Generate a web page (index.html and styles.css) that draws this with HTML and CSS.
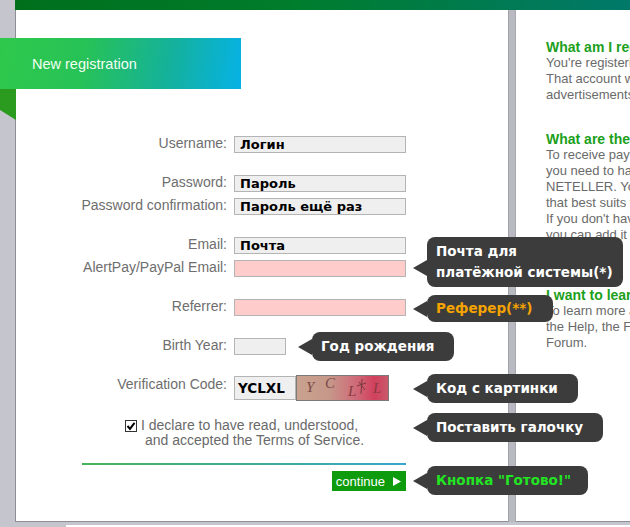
FILE: index.html
```html
<!DOCTYPE html>
<html lang="ru">
<head>
    <meta charset="UTF-8">
    <meta name="viewport" content="width=device-width, initial-scale=1.0">
    <title>New registration</title>
    <link rel="stylesheet" href="styles.css">
</head>
<body>
    <div class="page">
        <div class="topbar"></div>
        <div class="columns">
            <div class="main">
                <div class="banner">New registration</div>

                <form class="form">
                    <div class="row">
                        <label class="label">Username:</label>
                        <div class="input">Логин</div>
                    </div>
                    <div class="row gap">
                        <label class="label">Password:</label>
                        <div class="input">Пароль</div>
                    </div>
                    <div class="row">
                        <label class="label">Password confirmation:</label>
                        <div class="input">Пароль ещё раз</div>
                    </div>
                    <div class="row gap">
                        <label class="label">Email:</label>
                        <div class="input">Почта</div>
                    </div>
                    <div class="row">
                        <label class="label">AlertPay/PayPal Email:</label>
                        <div class="input pink"></div>
                        <div class="tip tip-pay">Почта для<br>платёжной системы(*)</div>
                    </div>
                    <div class="row gap">
                        <label class="label">Referrer:</label>
                        <div class="input pink"></div>
                        <div class="tip tip-ref"><span class="orange">Реферер(**)</span></div>
                    </div>
                    <div class="row gap">
                        <label class="label">Birth Year:</label>
                        <div class="input short"></div>
                        <div class="tip tip-year">Год рождения</div>
                    </div>
                    <div class="row code-row">
                        <label class="label">Verification Code:</label>
                        <div class="input code">YCLXL</div>
                        <div class="captcha">
                            <span class="cl cl1">Y</span>
                            <span class="cl cl2">C</span>
                            <span class="cl cl3">L</span>
                            <svg class="cl cl4" width="10" height="15" viewBox="0 0 10 15">
                                <path d="M5 0 L4 15 M0 7 L9 4 M2 3 L8 11" stroke="#7a3a40" stroke-width="1" fill="none"/>
                            </svg>
                            <span class="cl cl5">L</span>
                        </div>
                        <div class="tip tip-code">Код с картинки</div>
                    </div>
                    <div class="check">
                        <span class="box">
                            <svg width="10" height="10" viewBox="0 0 10 10">
                                <path d="M1.5 5 L4 7.8 L8.5 1.8" stroke="#000" stroke-width="2" fill="none"/>
                            </svg>
                        </span>
                        <span class="terms">I declare to have read, understood,<br>&nbsp;and accepted the Terms of Service.</span>
                        <div class="tip tip-check">Поставить галочку</div>
                    </div>
                    <div class="rule"></div>
                    <div class="actions">
                        <button type="submit" class="btn">continue
                            <svg width="8" height="9" viewBox="0 0 8 9"><path d="M0 0 L8 4.5 L0 9 Z" fill="#fff"/></svg>
                        </button>
                        <div class="tip tip-btn"><span class="green">Кнопка "Готово!"</span></div>
                    </div>
                </form>
            </div>
            <div class="divider"></div>
            <div class="side">
                <h3>What am I registering for?</h3>
                <p>You're registering for a free account.<br>That account will allow you to view<br>advertisements and earn money.</p>
                <h3>What are the payment options?</h3>
                <p>To receive payments from our site<br>you need to have an AlertPay, PayPal or<br>NETELLER. You may choose the one<br>that best suits your needs.<br>If you don't have one of these accounts,<br>you can add it later in your settings.<br>It's free.</p>
                <h3>I want to learn more!</h3>
                <p>To learn more about us, please visit<br>the Help, the FAQ or the<br>Forum.</p>
            </div>
        </div>
        <div class="footer"></div>
    </div>
</body>
</html>
```

FILE: styles.css
```css
body {
    margin: 0;
    background: #c5c5cd;
    font-family: "Liberation Sans", Arial, sans-serif;
    font-size: 13px;
    overflow: hidden;
}
.page {
    margin-left: 15px;
}
.topbar {
    height: 10px;
    background: linear-gradient(90deg, #006f1c, #007d2c 45%, #00796a);
}
.columns {
    display: flex;
    height: 512px;
}
.main {
    width: 493px;
    flex: none;
    box-sizing: border-box;
    background: #fff;
    border-left: 1px solid #8e8e96;
    border-bottom: 1px solid #8e8e96;
    padding-top: 28px;
}
.banner {
    position: relative;
    margin-left: -16px;
    width: 241px;
    height: 51px;
    line-height: 53px;
    padding-left: 32px;
    box-sizing: border-box;
    color: #f2fff2;
    font-size: 14.5px;
    background: linear-gradient(100deg, #2ec94b 0%, #27c257 35%, #14b19c 70%, #06b2e6 100%);
}
.banner::after {
    content: "";
    position: absolute;
    left: 0;
    top: 100%;
    width: 16px;
    height: 31px;
    background: #2a9b1f;
    clip-path: polygon(0 0, 100% 0, 100% 100%, 0 68%);
}
.form {
    margin-top: 47px;
}
.row {
    display: flex;
    align-items: flex-start;
    position: relative;
    margin-top: 6px;
}
.row:first-child {
    margin-top: 0;
}
.row.gap {
    margin-top: 22px;
}
.label {
    width: 211px;
    flex: none;
    margin-right: 7px;
    margin-top: -1px;
    text-align: right;
    font-size: 14px;
    line-height: 16px;
    color: #6e6e6e;
}
.input {
    width: 172px;
    height: 17px;
    box-sizing: border-box;
    border: 1px solid #b4b4b4;
    background: #efefef;
    padding-left: 5px;
    font: bold 13px "DejaVu Sans", Verdana, sans-serif;
    line-height: 15px;
    color: #000;
}
.input.pink {
    background: #ffcccc;
}
.input.short {
    width: 52px;
}
.code-row {
    margin-top: 20px;
}
.code-row .label {
    margin-top: 1px;
}
.input.code {
    width: 62px;
    height: 24px;
    margin-top: 1px;
    font-size: 13.5px;
    line-height: 22px;
    padding-left: 3px;
}
.captcha {
    position: relative;
    width: 93px;
    height: 26px;
    box-sizing: border-box;
    border: 1px solid #7a7a7a;
    background: linear-gradient(90deg, #c9a28e 0%, #c6988a 35%, #cf6a78 65%, #d1405e 85%, #c85a6a 100%);
}
.cl {
    position: absolute;
    font: italic 15px "Liberation Serif", serif;
    color: #7d4a48;
}
.cl1 { left: 9px; top: 3px; }
.cl2 { left: 28px; top: -1px; }
.cl3 { left: 51px; top: 7px; color: #8a3a40; }
.cl4 { left: 60px; top: 3px; }
.cl5 { left: 76px; top: 4px; color: #8a3a40; }
.check {
    position: relative;
    display: flex;
    align-items: flex-start;
    margin-top: 17px;
    padding-left: 109px;
    gap: 4px;
}
.box {
    width: 12px;
    height: 12px;
    margin-top: 2px;
    box-sizing: border-box;
    border: 1px solid #333;
    background: #fff;
    display: flex;
    align-items: center;
    justify-content: center;
}
.terms {
    font-size: 14px;
    line-height: 15px;
    color: #6a6a6a;
}
.rule {
    margin: 15px 0 0 66px;
    width: 324px;
    height: 2px;
    background: linear-gradient(90deg, #45b55a, #3aa5cc);
}
.actions {
    position: relative;
    width: 390px;
    margin-top: 6px;
    display: flex;
    justify-content: flex-end;
}
.btn {
    height: 20px;
    padding: 0 5px 0 4px;
    border: none;
    background: #0e9c0e;
    color: #fff;
    font-family: "Liberation Sans", Arial, sans-serif;
    font-size: 13px;
    display: flex;
    align-items: center;
    gap: 8px;
    cursor: pointer;
}
.tip {
    position: absolute;
    left: 411px;
    top: -1px;
    background: #3c3c3c;
    color: #fff;
    font: bold 13.5px "DejaVu Sans", Verdana, sans-serif;
    line-height: 17px;
    border-radius: 8px;
    padding: 6px 20px 6px 9px;
    white-space: nowrap;
    z-index: 2;
}
.tip::before {
    content: "";
    position: absolute;
    left: -14px;
    top: 50%;
    margin-top: -8px;
    border-right: 14px solid #3c3c3c;
    border-top: 8px solid transparent;
    border-bottom: 8px solid transparent;
}
.tip-pay {
    top: -23px;
    line-height: 21px;
    padding-top: 4px;
    padding-bottom: 4px;
    padding-right: 10px;
}
.tip-pay::before {
    top: 31px;
}
.tip-ref {
    top: -4px;
    padding-top: 5px;
    padding-bottom: 5px;
}
.tip-year {
    left: 296px;
    top: -6px;
}
.tip-check {
    top: -5px;
}
.tip-btn {
    top: -5px;
    padding-right: 17px;
}
.orange {
    color: #f5a300;
}
.green {
    color: #22e622;
}
.divider {
    width: 8px;
    flex: none;
    box-sizing: border-box;
    background: #b9b9c1;
    border-left: 1px solid #a2a2aa;
    border-right: 1px solid #a8a8b0;
}
.side {
    flex: 1;
    min-width: 0;
    background: #fff;
    border-bottom: 1px solid #8e8e96;
    padding: 29px 0 0 30px;
    overflow: hidden;
    white-space: nowrap;
    color: #6a6a6a;
    line-height: 16px;
}
.side h3 {
    margin: 0;
    font-size: 14px;
    color: #1ca01c;
}
.side p {
    margin: 0 0 28px;
}
.footer {
    margin: 3px 0 0 51px;
    height: 10px;
    background: #fff;
}
```
